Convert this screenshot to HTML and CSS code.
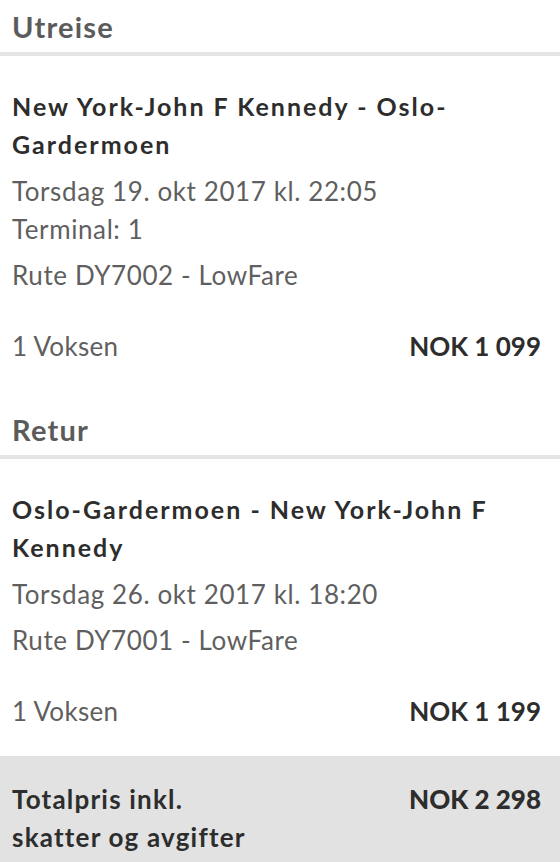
FILE: index.html
```html
<!DOCTYPE html>
<html lang="no">
<head>
    <meta charset="UTF-8">
    <meta name="viewport" content="width=device-width, initial-scale=1.0">
    <title>Reiseoppsummering</title>
    <link rel="stylesheet" href="styles.css">
</head>
<body>

    <section class="leg">
        <h2 class="leg-title">Utreise</h2>
        <div class="leg-body">
            <h3 class="route">New York-John F Kennedy - Oslo-Gardermoen</h3>
            <p class="when">Torsdag 19. okt 2017 kl. 22:05</p>
            <p class="terminal">Terminal: 1</p>
            <p class="fare">Rute DY7002 - LowFare</p>
            <div class="price-row">
                <span>1 Voksen</span>
                <strong>NOK 1&nbsp;099</strong>
            </div>
        </div>
    </section>

    <section class="leg">
        <h2 class="leg-title">Retur</h2>
        <div class="leg-body">
            <h3 class="route">Oslo-Gardermoen - New York-John F Kennedy</h3>
            <p class="when">Torsdag 26. okt 2017 kl. 18:20</p>
            <p class="fare">Rute DY7001 - LowFare</p>
            <div class="price-row">
                <span>1 Voksen</span>
                <strong>NOK 1&nbsp;199</strong>
            </div>
        </div>
    </section>

    <div class="total">
        <span class="total-label">Totalpris inkl.<br>skatter og avgifter</span>
        <strong class="total-price">NOK 2&nbsp;298</strong>
    </div>

</body>
</html>
```

FILE: styles.css
```css
body {
    font-family: Lato, "Open Sans", sans-serif;
    background-color: #fff;
    color: #5f5f5f;
    margin: 0;
    padding: 0;
}
.leg {
    margin-bottom: 46px;
}
.leg:first-child .leg-title {
    padding-top: 8px;
}
.leg-title {
    margin: 0;
    padding: 0 12px 6px;
    font-size: 29px;
    line-height: 38px;
    font-weight: 700;
    letter-spacing: 1.2px;
    color: #5b5b5b;
    border-bottom: 4px solid #e4e4e4;
}
.leg-body {
    padding: 31px 19px 0 12px;
}
.route {
    margin: 0;
    font-size: 25px;
    line-height: 38px;
    font-weight: 700;
    letter-spacing: 2px;
    color: #2d2d2d;
}
.when, .terminal, .fare {
    margin: 0;
    font-size: 26px;
    line-height: 38px;
    letter-spacing: 0.6px;
}
.when {
    margin-top: 9px;
}
.fare {
    margin-top: 8px;
}
.price-row {
    display: flex;
    justify-content: space-between;
    margin-top: 33px;
    font-size: 26px;
    line-height: 38px;
}
.price-row span {
    letter-spacing: 0.3px;
}
.price-row strong {
    color: #2d2d2d;
}
.total {
    display: flex;
    justify-content: space-between;
    align-items: flex-start;
    margin-top: -20px;
    padding: 24px 19px 40px 12px;
    background-color: #e2e2e2;
    color: #2d2d2d;
    font-size: 26px;
    line-height: 38px;
    font-weight: 700;
}
.total-label {
    letter-spacing: 1.2px;
}
```
